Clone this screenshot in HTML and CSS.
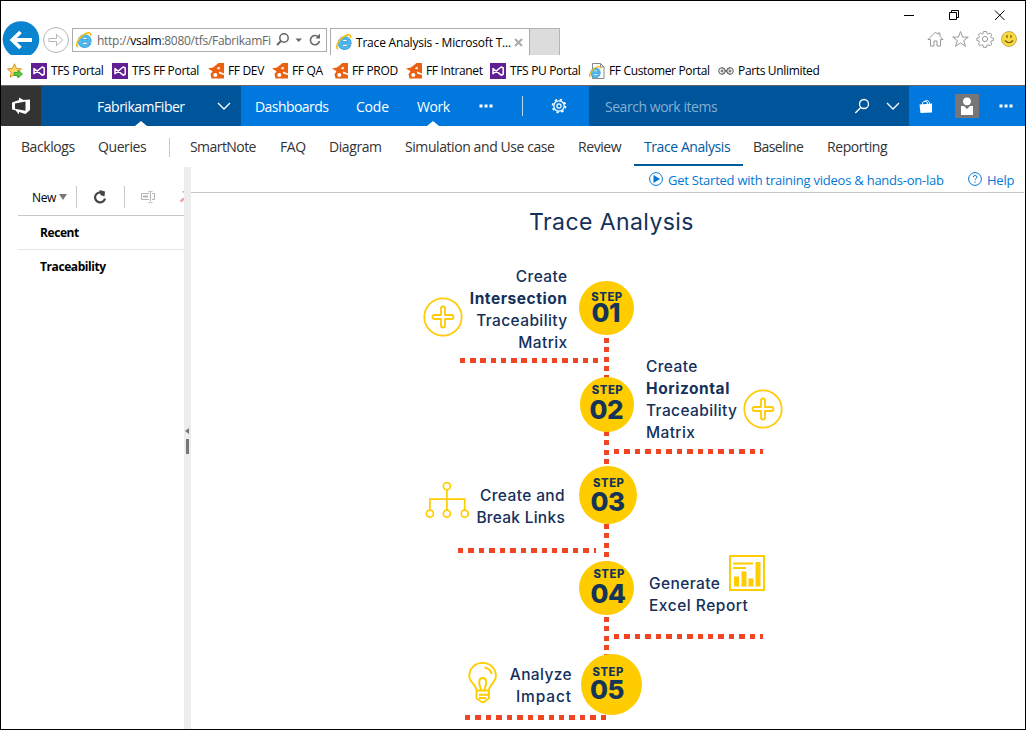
FILE: index.html
```
<!DOCTYPE html>
<html lang="en">
<head>
<meta charset="utf-8">
<title>Trace Analysis - Microsoft Team Foundation Server</title>
<link rel="stylesheet" href="styles.css">
</head>
<body>
<svg width="0" height="0" class="defs" aria-hidden="true">
  <symbol id="ie" viewBox="0 0 16 16">
    <path d="M15.200 10.200H6c.2 1.700 1.300 2.500 2.700 2.500 1.200 0 2-.4 2.500-1.200h3.600c-.9 2.500-3.200 4-6.100 4-3.800 0-6.500-2.500-6.500-6.300s2.800-6.500 6.500-6.500c4 0 6.700 2.900 6.500 7.500zM6 7.600h5.600c-.1-1.400-1.300-2.300-2.800-2.300S6.200 6.100 6 7.600z" fill="#4dbcf0" stroke="#1c86cc" stroke-width=".7"/>
    <path d="M2.200 15C-1.500 13.500 2.500 5.600 8.500 2.300c4.200-2.200 7-1.900 6 1.700" fill="none" stroke="#f5bd1a" stroke-width="1.600"/>
  </symbol>
  <symbol id="vs" viewBox="0 0 16 16">
    <path fill="#611f93" d="M0 0h16v16H0z"/>
    <path d="M3 5.500v5.200L11.200 4l2 1v6.300l-2 .9z" fill="none" stroke="#fff" stroke-width="1.500" stroke-linejoin="round"/>
  </symbol>
  <symbol id="ff" viewBox="0 0 16 16">
    <path fill="#eb6112" d="M0 5.500 5 4.500 10.500 0H16v15.500H3.500L2.500 11l2-2.500z"/>
    <circle cx="7.300" cy="12" r="2" fill="#fff"/><path fill="#fff" d="M8.500 5.500 11.500 3.500l.3 3zM11 8.500l5 2V12l-5-1.500zM0 8l4-.8L2 10z"/>
  </symbol>
  <symbol id="plus" viewBox="0 0 40 40">
    <g fill="none" stroke="#ffca08"><circle cx="20" cy="20" r="18.700" stroke-width="1.800"/>
    <path stroke-width="1.800" d="M18 11.500a2 2 0 0 1 4 0V18h6.500a2 2 0 0 1 0 4H22v6.500a2 2 0 0 1-4 0V22h-6.500a2 2 0 0 1 0-4H18z" stroke-linejoin="round"/></g>
  </symbol>
</svg>
<div class="window">
  <header class="chrome">
    <svg class="back" viewBox="0 0 38 34"><circle cx="19" cy="18.500" r="18.300" fill="#0a84cf"/><path d="M30 19H11M18.500 11l-8.200 8 8.200 8" fill="none" stroke="#fff" stroke-width="3.800"/></svg>
    <svg class="fwd" viewBox="0 0 28 28"><circle cx="14" cy="14" r="12.500" fill="none" stroke="#b5b5b5"/><path d="M7 12.500h7.500V8.300l6.200 5.700-6.200 5.700v-4.200H7z" fill="none" stroke="#b5b5b5"/></svg>
    <div class="address">
      <svg class="i16" viewBox="0 0 16 16"><use href="#ie"/></svg>
      <span class="url">http://<b>vsalm</b>:8080/tfs/FabrikamFi</span>
      <svg class="addr-tools" viewBox="0 0 46 16"><g fill="none" stroke="#666"><circle cx="8" cy="6" r="4.200" stroke-width="1.500"/><path d="M5 9 1 13" stroke-width="2"/><path d="M42.500 5.200A4.600 4.600 0 1 0 43.500 9" stroke-width="1.600"/></g><path d="M19.500 6.500h6.500L22.700 10zM39.500 6.500h4.500v-5z" fill="#666"/></svg>
    </div>
    <div class="tab"><svg class="i16" viewBox="0 0 16 16"><use href="#ie"/></svg><span>Trace Analysis - Microsoft T...</span>
      <svg class="close" viewBox="0 0 9 9"><path d="m1 1 7 7M8 1 1 8" stroke="#aaa" stroke-width="2"/></svg></div>
    <div class="newtab"></div>
    <div class="controls">
      <svg class="caption" viewBox="0 0 104 12"><g fill="none" stroke="#000" stroke-width="1"><path d="M0 6.500h10M45.500 3.500h7v7h-7zM47.500 3.500v-2h7v7h-2M91 1.500l9.500 9.500M100.500 1.500 91 11"/></g></svg>
      <svg class="tools" viewBox="0 0 90 18"><g fill="none" stroke="#999"><path d="M1 9.500 8.500 2l2.500 2.500V3h2v3.500l3 3h-2.500v6.500h-3.500v-5H7v5H3.500V9.500z"/><path d="m33.500 1.500 2.100 5.600h5.700l-4.600 3.600 1.800 5.600-5-3.400-5 3.400 1.800-5.600-4.600-3.600h5.700z"/><circle cx="58" cy="9" r="2.600"/><path d="m56.500 1.500 3 0 .4 2 1.300.6 1.800-1.200 1.800 1.900-1.100 1.700.5 1.200 2.100.4v2.500l-2.100.4-.5 1.300 1.100 1.700-1.800 1.800-1.800-1.100-1.300.5-.4 2.100h-3l-.4-2.100-1.200-.5-1.700 1.100-1.900-1.800 1.200-1.700-.6-1.300-2-.4V8.100l2-.4.6-1.200-1.200-1.700 1.900-1.900 1.700 1.200 1.200-.6z"/></g><circle cx="82" cy="9" r="7.500" fill="#fbd83c" stroke="#b79a51" stroke-width=".8"/><path d="M80 5v3M84 5v3M78 10.500q4 4.500 8 0" stroke="#6d5a20" stroke-width="1.200" fill="none"/></svg>
    </div>
  </header>

  <nav class="favorites">
    <svg class="i16" viewBox="0 0 16 16"><path d="m7.500.8 2 4.700 5 .4-3.800 3.300 1.200 5-4.400-2.700-4.400 2.700 1.200-5L.5 5.900l5-.4z" fill="#ffd668" stroke="#d9961b"/><path d="M7 9.500h4V7l4.500 4-4.500 4v-2.500H7z" fill="#5cc840" stroke="#2e9a2a" stroke-width=".8"/></svg>
    <a><svg viewBox="0 0 16 16"><use href="#vs"/></svg>TFS Portal</a>
    <a><svg viewBox="0 0 16 16"><use href="#vs"/></svg>TFS FF Portal</a>
    <a><svg viewBox="0 0 16 16"><use href="#ff"/></svg>FF DEV</a>
    <a><svg viewBox="0 0 16 16"><use href="#ff"/></svg>FF QA</a>
    <a><svg viewBox="0 0 16 16"><use href="#ff"/></svg>FF PROD</a>
    <a><svg viewBox="0 0 16 16"><use href="#ff"/></svg>FF Intranet</a>
    <a><svg viewBox="0 0 16 16"><use href="#vs"/></svg>TFS PU Portal</a>
    <a><svg viewBox="0 0 16 16"><path d="M3.500.5h8l3.500 3.500v11.500H3.500z" fill="#fff" stroke="#888"/><path d="M11.500.5V4H15" fill="none" stroke="#888"/><use href="#ie" x="0" y="3" width="12" height="12"/></svg>FF Customer Portal</a>
    <a><svg viewBox="0 0 16 16"><g fill="none" stroke="#555"><circle cx="4" cy="8" r="3.300"/><circle cx="12" cy="8" r="3.300"/><circle cx="4" cy="8" r="1"/><circle cx="12" cy="8" r="1"/><path d="M4 4.700 12 11.300M4 11.300 12 4.700" stroke-width=".7"/></g></svg>Parts Unlimited</a>
  </nav>

  <nav class="bar">
    <div class="logo"><svg viewBox="0 0 20 20"><path fill="#fff" fill-rule="evenodd" d="M1 6.500 8 4V1.500l4.500 2.500 6.500-.5V14l-4.500 4L8 16v2.500L4.500 14.300 1 13.500zM4 7.400v5.400l10.500 2V5.500z"/></svg></div>
    <div class="project"><span>FabrikamFiber</span><svg class="chev" viewBox="0 0 14 8"><path d="m1 1 6 6 6-6" fill="none" stroke="#fff" stroke-width="1.300"/></svg><i class="notch"></i></div>
    <div class="hubs">
      <span>Dashboards</span><span>Code</span><span class="current">Work<i class="notch"></i></span>
      <svg class="dots" viewBox="0 0 14 4"><path d="M.5.500h3v3h-3zM5.500.500h3v3h-3zM10.500.500h3v3h-3z" fill="#fff"/></svg>
      <i class="rule"></i>
      <svg class="gear" viewBox="0 0 16 16"><g fill="none" stroke="#fff"><circle cx="8" cy="8" r="5.200" stroke-width="1.300"/><circle cx="8" cy="8" r="2.100" stroke-width="1.200"/><circle cx="8" cy="8" r="6.500" stroke-width="1.700" stroke-dasharray="2.300 2.805"/></g></svg>
    </div>
    <div class="search"><span>Search work items</span>
      <svg class="mag" viewBox="0 0 16 16"><g fill="none" stroke="#fff" stroke-width="1.300"><circle cx="10" cy="6" r="4.500"/><path d="M6.800 9.500 1.300 15"/></g></svg>
      <svg class="chev" viewBox="0 0 14 8"><path d="m1 1 6 6 6-6" fill="none" stroke="#fff" stroke-width="1.300"/></svg></div>
    <div class="account">
      <svg class="bag" viewBox="0 0 14 14"><path d="M.5 5.500 13 4.500v9L1.500 14z" fill="#fff"/><path d="M3.500 6V3.500q2.500-3 5 0v2M6 2q3-1.500 4.500 1.500v2" fill="none" stroke="#fff"/></svg>
      <svg class="avatar" viewBox="0 0 24 24"><path fill="#767676" d="M0 0h24v24H0z"/><circle cx="12" cy="7.300" r="3.900" fill="#fff"/><path fill="#fff" d="M6 12h3l3 3 3-3h3v9H6z"/></svg>
      <svg class="dots" viewBox="0 0 14 4"><path d="M.5.500h3v3h-3zM5.500.500h3v3h-3zM10.500.500h3v3h-3z" fill="#fff"/></svg>
    </div>
  </nav>

  <nav class="subnav">
    <span>Backlogs</span><span>Queries</span><i></i><span class="tight">SmartNote</span><span>FAQ</span><span>Diagram</span><span>Simulation and Use case</span><span>Review</span><span class="active">Trace Analysis</span><span class="tight">Baseline</span><span>Reporting</span>
  </nav>

  <main class="body">
    <aside class="side">
      <div class="toolbar">
        <span>New</span><i class="caret"></i><i class="sep"></i>
        <svg class="refresh" viewBox="0 0 14 14"><path d="M9.500 3A5 5 0 1 0 12 8.500" fill="none" stroke="#444" stroke-width="2.200"/><path d="M6.500 0 12 1.500 11.500 6.500 7.500 5z" fill="#444"/></svg>
        <i class="sep"></i>
        <svg class="rename" viewBox="0 0 14 12"><path d="M8 2.500H.5v6H8M11 2.500h2.500v6H11M7.500.500h1.500l.500.500.500-.5h1.500M9.500 1v9.500M7.500 11.500h1.500l.500-.5.500.5h1.500" fill="none" stroke="#b4b4b4"/><path d="M2 4.500h5v2H2z" fill="#b4b4b4"/></svg>
        <svg class="del" viewBox="0 0 4 12"><path d="M.5 10.500 4 7.500M3 0l1 1" stroke="#f0a3a3" stroke-width="2.500"/></svg>
      </div>
      <div class="folder recent">Recent</div>
      <div class="folder trace">Traceability</div>
    </aside>
    <div class="splitter"><i class="tri"></i><i class="grip"></i></div>
    <section class="content">
      <div class="links">
        <svg viewBox="0 0 14 14"><circle cx="7" cy="7" r="6.400" fill="none" stroke="#0078d7"/><path d="m4.500 3 6.500 4-6.500 4z" fill="#0078d7"/></svg><span class="started">Get Started with training videos &amp; hands-on-lab</span>
        <svg viewBox="0 0 14 14"><circle cx="7" cy="7" r="6.400" fill="none" stroke="#0078d7"/><path d="M5.200 5.200q.2-1.700 1.900-1.700 1.800.1 1.800 1.600 0 .9-1 1.600-.8.600-.8 1.500M7.100 9.500v1.300" fill="none" stroke="#0078d7"/></svg><span>Help</span>
      </div>
      <div class="diagram">
        <h1>Trace Analysis</h1>
        <i class="vline"></i>
        <i class="hline h1"></i><i class="hline h2"></i><i class="hline h3"></i><i class="hline h4"></i><i class="hline h5"></i>

        <div class="node n1"><small>STEP</small><b>01</b></div>
        <div class="node n2"><small>STEP</small><b>02</b></div>
        <div class="node n3"><small>STEP</small><b>03</b></div>
        <div class="node n4"><small>STEP</small><b>04</b></div>
        <div class="node n5"><small>STEP</small><b>05</b></div>

        <p class="label l1">Create<br><b>Intersection</b><br>Traceability<br>Matrix</p>
        <p class="label l2">Create<br><b>Horizontal</b><br>Traceability<br>Matrix</p>
        <p class="label l3">Create and<br><span class="snug">Break Links</span></p>
        <p class="label l4">Generate<br><span class="loose">Excel Report</span></p>
        <p class="label l5">Analyze<br><span class="wide">Impact</span></p>

        <svg class="pic p1" viewBox="0 0 40 40"><use href="#plus"/></svg>
        <svg class="pic p2" viewBox="0 0 40 40"><use href="#plus"/></svg>
        <svg class="pic p3" viewBox="0 0 44 38"><g fill="none" stroke="#fc0" stroke-width="1.700"><circle cx="21.900" cy="4.200" r="3.500"/><circle cx="4.900" cy="31.700" r="3.500"/><circle cx="21.900" cy="31.700" r="3.500"/><circle cx="39.700" cy="31.700" r="3.500"/><path d="M21.900 7.700v20.500M4.900 28.200V17.200h34.800v11"/></g></svg>
        <svg class="pic p4" viewBox="0 0 36 36"><path d="M1 1h34v34H1z" fill="none" stroke="#fc0" stroke-width="2"/><path d="M4 7.500h20v2H4zM4 12h13v2H4zM5 21.500h5v10H5zM12.500 16.500h5v15h-5zM19.500 23.500h5v8h-5zM26.500 7h5v24.500h-5z" fill="#fc0"/></svg>
        <svg class="pic p5" viewBox="0 0 30 44"><g fill="none" stroke="#fc0" stroke-width="1.900"><path d="M8.500 28.500C8.500 23 1.300 20.500 1.300 13.700a13.300 12.800 0 0 1 26.600 0c0 6.800-7 9.300-7 14.800z" stroke-linejoin="round"/><path d="M13 28.500c0-3-1.800-4.500-1.800-8 0-6 7 -6 7 0 0 3.500-1.800 5-1.800 8M16.500 5.500q6 1.200 7.300 6.500"/><path d="M8.500 28.500v8l3 1.800q3 4 6.300 0l3.100-1.800v-8M11 32.800h9.500M11 36h7"/></g></svg>
      </div>
    </section>
  </main>
</div>
</body>
</html>
```
FILE: styles.css
```
* { box-sizing: border-box; }
body { margin: 0; font-family: "Open Sans", "Noto Sans", sans-serif; font-size: 12px; color: #000; background: #fff; }
svg { display: block; flex: none; }
i { display: block; flex: none; }
.defs { position: absolute; }
.window { width: 1026px; height: 730px; border: 1px solid #000; display: flex; flex-direction: column; overflow: hidden; white-space: nowrap; }
.i16 { width: 16px; height: 16px; }

/* browser chrome */
.chrome { height: 54px; display: flex; align-items: flex-end; padding-left: 1px; flex: none; }
.back { width: 38px; height: 34px; }
.fwd { width: 28px; height: 28px; margin: 0 2px 1px; }
.address { width: 255px; height: 24px; margin-bottom: 3px; border: 1px solid #ababab; display: flex; align-items: center; padding-left: 3px; color: #666; letter-spacing: -.28px; }
.address b { font-weight: 400; color: #000; }
.url { width: 175px; margin-left: 5px; }
.addr-tools { width: 46px; height: 16px; margin-left: 4px; }
.tab { width: 200px; height: 27px; margin-left: 3px; border: 1px solid #ababab; border-bottom: 0; display: flex; align-items: center; padding-left: 5px; letter-spacing: -.2px; }
.tab span { width: 155px; margin: 0 3px 0 4px; }
.close { width: 9px; height: 9px; margin-top: 1px; }
.newtab { width: 30px; height: 27px; background: #dcdcdc; border: 1px solid #b4b4b4; border-width: 1px 1px 0 0; }
.controls { margin-left: auto; padding-right: 8px; height: 46px; }
.caption { width: 104px; height: 12px; margin-left: -23px; }
.tools { width: 90px; height: 18px; margin-top: 9px; }

.favorites { height: 30px; flex: none; display: grid; grid-template-columns: 24px 81px 96px 64px 60px 74px 84px 99px 129px 110px; padding-left: 6px; align-items: center; letter-spacing: -.34px; padding-top: 1px; }
.favorites a { display: flex; align-items: center; gap: 4px; }
.favorites a svg { width: 16px; height: 16px; }

/* top navigation */
.bar { height: 41px; flex: none; border-top: 1px solid #666; display: flex; background: #0078de; color: #fff; font-size: 14px; letter-spacing: -.43px; }
.bar > div { display: flex; align-items: center; }
.logo { width: 40px; background: #333; justify-content: center; }
.logo svg { width: 20px; height: 20px; }
.project { width: 200px; background: #005499; padding-left: 56px; position: relative; }
.bar .project span { width: 120px; letter-spacing: -.48px; }
.chev { width: 14px; height: 8px; }
.notch { position: absolute; bottom: 0; left: 94px; border: 6px solid transparent; border-top: 0; border-bottom: 5px solid #fff; }
.hubs { width: 348px; padding-left: 14px; }
.hubs span:nth-child(1) { width: 101px; letter-spacing: -.56px; }
.hubs span:nth-child(2) { width: 61px; letter-spacing: -.2px; }
.hubs .current { width: 62px; height: 100%; display: flex; align-items: center; position: relative; }
.current .notch { left: 10px; }
.dots { width: 14px; height: 4px; }
.rule { width: 1px; height: 20px; background: #bcd7ef; margin-left: 29px; }
.gear { width: 16px; height: 16px; margin-left: 28px; }
.search { width: 320px; background: #005499; padding-left: 16px; color: #83b0d5; }
.search span { width: 249px; letter-spacing: -.46px; }
.mag { width: 16px; height: 16px; margin-right: 16px; }
.account { width: 116px; padding-left: 10px; }
.bag { width: 14px; height: 14px; margin-right: 22px; }
.avatar { width: 24px; height: 24px; margin: 0 20px 1px 0; }

.subnav { height: 41px; flex: none; display: flex; padding-left: 10px; font-size: 14px; letter-spacing: -.42px; color: #333; }
.subnav span { padding: 0 10px; height: 40px; line-height: 41px; flex: none; }
.subnav span:nth-child(1) { width: 77px; }
.subnav span:nth-child(2) { width: 71px; }
.subnav i { width: 1px; height: 19px; background: #c8c8c8; margin: 12px 10px 0 10px; }
.subnav span:nth-child(4) { width: 90px; }
.subnav span:nth-child(5) { width: 49px; }
.subnav span:nth-child(6) { width: 76px; }
.subnav span:nth-child(7) { width: 173px; }
.subnav span:nth-child(8) { width: 66px; }
.subnav span:nth-child(9) { width: 109px; }
.subnav span:nth-child(10) { width: 74px; }
.subnav .tight { letter-spacing: -.56px; }
.subnav .active { color: #005a9e; border-bottom: 2px solid #005a9e; }

/* left pane */
.body { flex: 1; display: flex; min-height: 0; }
.side { width: 183px; padding-left: 17px; flex: none; overflow: hidden; }
.toolbar { height: 49px; border-bottom: 1px solid #c8c8c8; display: flex; align-items: center; padding: 12px 0 0 14px; letter-spacing: -.36px; }
.toolbar span { width: 28px; }
.caret { width: 8px; height: 6px; background: #777; clip-path: polygon(0 0, 100% 0, 50% 100%); }
.sep { width: 1px; height: 22px; background: #c8c8c8; margin-left: 8px; }
.caret + .sep { margin-left: 9px; }
.refresh { width: 14px; height: 14px; margin: 0 9px 0 16px; }
.rename { width: 14px; height: 12px; margin-left: 16px; }
.del { width: 4px; height: 12px; margin-left: 25px; }
.folder { height: 34px; padding-left: 22px; line-height: 34px; font-weight: 700; letter-spacing: -.42px; }
.recent { border-bottom: 1px solid #e6e6e6; }
.splitter { width: 7px; background: #ededed; flex: none; padding: 261px 0 0 1px; }
.tri { width: 0; border: 3px solid transparent; border-right: 4px solid #777; border-left: 0; }
.grip { width: 3px; height: 15px; background: #767676; margin: 5px 0 0 1px; }

/* content */
.content { flex: 1; position: relative; }
.links { height: 26px; border-bottom: 1px solid #c8c8c8; display: flex; align-items: center; padding-left: 458px; font-size: 13px; letter-spacing: -.24px; color: #0078d7; margin-right: 1px; }
.links svg { width: 14px; height: 14px; margin: 0 5px 2px 0; }
.links .started { width: 300px; }

/* the infographic is a free canvas */
.diagram { position: relative; height: 536px; font-family: Inter, sans-serif; color: #15305a; }
.diagram > * { position: absolute; margin: 0; }
h1 { left: 338px; top: 14px; font-size: 23px; line-height: 30px; font-weight: 400; letter-spacing: .42px; }
.vline { left: 413px; top: 144.500px; width: 5px; height: 320px; background: repeating-linear-gradient(#f04523 0 4.900px, transparent 4.900px 9.300px); }
.hline { height: 5px; background: repeating-linear-gradient(90deg, #f04523 0 5.400px, transparent 5.400px 10.450px); }
.hline.h1 { left: 269px; top: 165px; width: 139px; background: repeating-linear-gradient(90deg, #f04523 0 5.400px, transparent 5.400px 10.230px); }
.hline.h2 { left: 422.700px; top: 256px; width: 149px; }
.hline.h3 { left: 267px; top: 355px; width: 138px; }
.hline.h4 { left: 422.700px; top: 441px; width: 149px; }
.hline.h5 { left: 273.700px; top: 522px; width: 141.500px; }
.node { width: 54.600px; height: 54.600px; border-radius: 50%; background: #fc0; color: #143458; display: flex; flex-direction: column; align-items: center; font-weight: 800; }
.node small { font-size: 11.300px; line-height: 12px; letter-spacing: .5px; padding-left: 1px; }
.node b { font-size: 26px; line-height: 24px; font-weight: 800; letter-spacing: -.5px; padding-right: 1.500px; }
.n1 { left: 388.200px; top: 87.700px; padding-top: 10.300px; }
.n1 b { margin-top: -1.500px; }
.n2 { left: 388.700px; top: 184px; padding-top: 7px; }
.n2 b { margin-top: 2px; }
.n3 { left: 388.300px; top: 273px; width: 58px; height: 58px; padding-top: 11px; }
.n3 b { margin-top: 1px; }
.n4 { left: 388.300px; top: 367.700px; padding: 7.300px 0 0 4px; }
.n4 b { margin-top: 2px; }
.n5 { left: 389.700px; top: 460.800px; width: 61px; height: 61px; padding: 12px 7px 0 0; }
.label { font-size: 15.500px; line-height: 22px; font-weight: 500; letter-spacing: .38px; }
.label b { font-weight: 700; letter-spacing: .55px; }
.l1, .l3, .l5 { text-align: right; }
.l1 { right: 457.500px; top: 73px; }
.l2 { left: 455px; top: 163px; }
.l3 { right: 460px; top: 292px; }
.l4 { left: 458px; top: 380px; }
.l5 { right: 453px; top: 471px; }
.label .snug { letter-spacing: .26px; }
.label .loose { letter-spacing: .52px; }
.label .wide { letter-spacing: .88px; }
.p1, .p2 { width: 40px; height: 40px; }
.p1 { left: 231.500px; top: 103.500px; }
.p2 { left: 551.700px; top: 195.700px; }
.p3 { left: 234px; top: 289px; width: 44px; height: 38px; }
.p4 { left: 538px; top: 362px; width: 36px; height: 36px; }
.p5 { left: 277px; top: 469px; width: 30px; height: 44px; }
```
